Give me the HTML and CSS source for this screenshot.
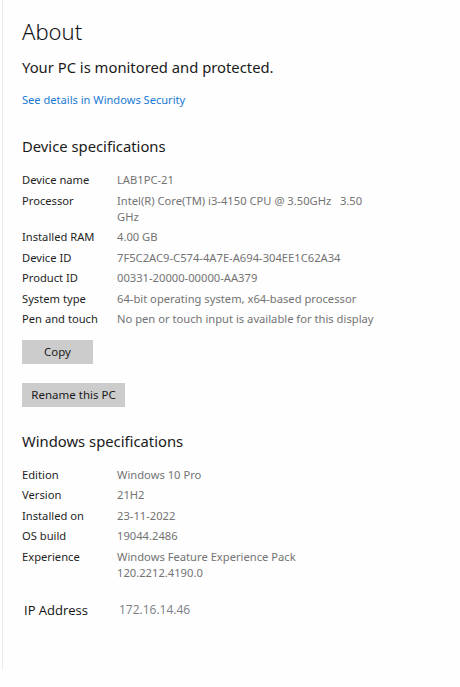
FILE: index.html
```html
<!DOCTYPE html>
<html>
<head>
<meta charset="utf-8">
<link rel="stylesheet" href="styles.css">
</head>
<body>
<div class="page">
  <h1 class="title">About</h1>
  <p class="status">Your PC is monitored and protected.</p>
  <a class="link" href="#">See details in Windows Security</a>

  <h2 class="section">Device specifications</h2>
  <div class="specs">
    <div class="row"><span class="label">Device name</span><span class="value">LAB1PC-21</span></div>
    <div class="row"><span class="label">Processor</span><span class="value">Intel(R) Core(TM) i3-4150 CPU @ 3.50GHz&nbsp;&nbsp;&nbsp;3.50 GHz</span></div>
    <div class="row"><span class="label">Installed RAM</span><span class="value">4.00 GB</span></div>
    <div class="row"><span class="label">Device ID</span><span class="value">7F5C2AC9-C574-4A7E-A694-304EE1C62A34</span></div>
    <div class="row"><span class="label">Product ID</span><span class="value">00331-20000-00000-AA379</span></div>
    <div class="row"><span class="label">System type</span><span class="value">64-bit operating system, x64-based processor</span></div>
    <div class="row"><span class="label">Pen and touch</span><span class="value">No pen or touch input is available for this display</span></div>
  </div>
  <button class="btn btn-copy">Copy</button>
  <button class="btn btn-rename">Rename this PC</button>

  <h2 class="section section-win">Windows specifications</h2>
  <div class="specs">
    <div class="row"><span class="label">Edition</span><span class="value">Windows 10 Pro</span></div>
    <div class="row"><span class="label">Version</span><span class="value">21H2</span></div>
    <div class="row"><span class="label">Installed on</span><span class="value">23-11-2022</span></div>
    <div class="row"><span class="label">OS build</span><span class="value">19044.2486</span></div>
    <div class="row"><span class="label">Experience</span><span class="value">Windows Feature Experience Pack 120.2212.4190.0</span></div>
  </div>
  <div class="ip-row"><span class="ip-label">IP Address</span><span class="ip-value">172.16.14.46</span></div>
</div>
</body>
</html>
```
FILE: styles.css
```css
html, body {
  margin: 0;
  padding: 0;
  background: #fefefe;
}
body {
  font-family: "Noto Sans", "Open Sans", sans-serif;
  color: #1b1b1b;
}
.page {
  margin-left: 2px;
  border-left: 1px solid #ececec;
  min-height: 670px;
  padding: 0 0 0 19px;
  display: flex;
  flex-direction: column;
  align-items: flex-start;
}
.title {
  font-weight: 300;
  font-size: 22px;
  line-height: 30px;
  margin: 16px 0 0 0;
  color: #111;
}
.status {
  font-size: 14.8px;
  line-height: 20px;
  margin: 11px 0 0 0;
  color: #1a1a1a;
}
.link {
  font-size: 11.1px;
  line-height: 16px;
  margin-top: 15px;
  color: #1a7ad4;
  text-decoration: none;
}
.section {
  font-weight: 400;
  font-size: 14.8px;
  line-height: 22px;
  margin: 27px 0 0 0;
  color: #1a1a1a;
}
.specs {
  display: flex;
  flex-direction: column;
  margin-top: 13px;
}
.row {
  display: grid;
  grid-template-columns: 95px 262px;
  font-size: 11.2px;
  line-height: 16px;
  padding: 2px 0 2.5px 0;
}
.label {
  color: #1e1e1e;
}
.value {
  color: #737373;
}
.btn {
  font-family: inherit;
  font-size: 11.5px;
  color: #1a1a1a;
  background: #cccccc;
  border: none;
  border-radius: 0;
  height: 24px;
  padding: 0;
}
.btn-copy {
  width: 71px;
  margin-top: 10px;
}
.btn-rename {
  width: 103px;
  margin-top: 19px;
}
.section-win {
  margin-top: 23px;
}
.ip-row {
  display: grid;
  grid-template-columns: 95px 200px;
  margin-top: 18px;
  padding-left: 2px;
}
.ip-label {
  font-family: "Open Sans", sans-serif;
  font-size: 13px;
  color: #111;
}
.ip-value {
  font-family: "Open Sans", sans-serif;
  font-size: 12px;
  color: #7a7f86;
}
```
